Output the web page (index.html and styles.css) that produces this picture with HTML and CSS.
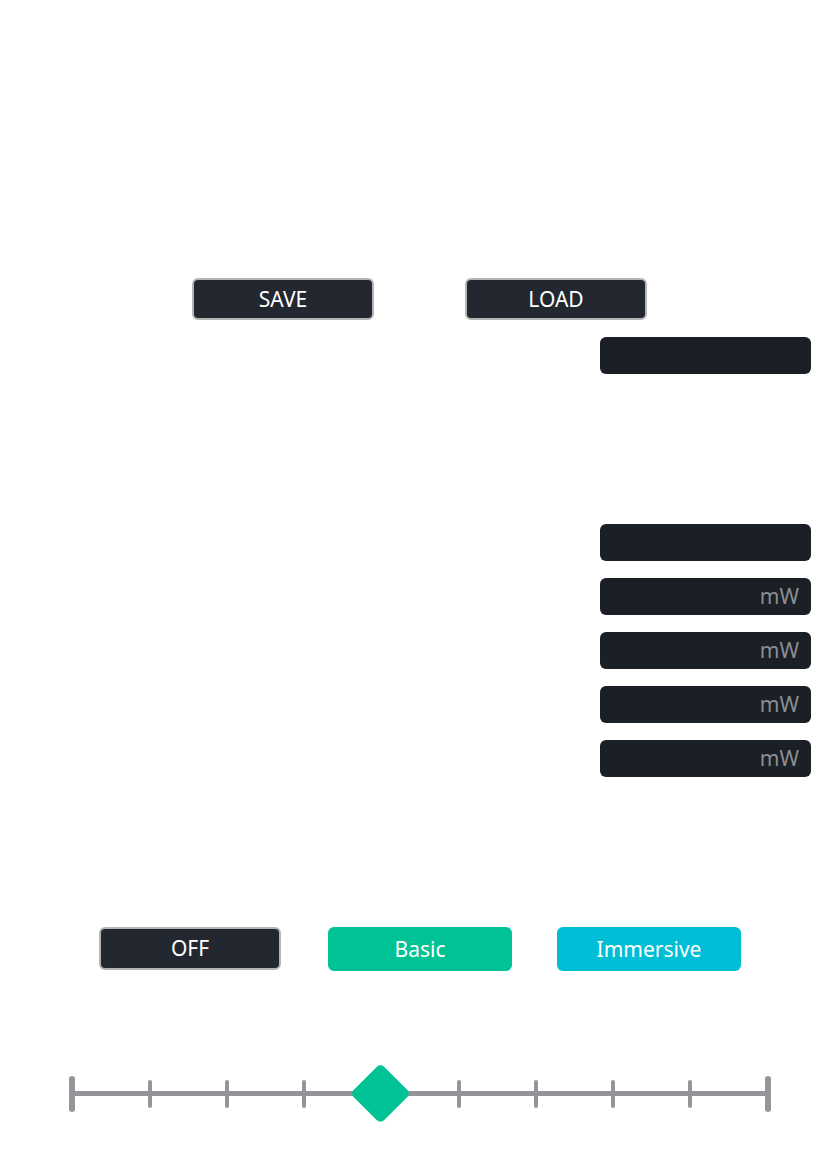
FILE: index.html
```html
<!DOCTYPE html>
<html>
<head>
<meta charset="utf-8">
<link rel="stylesheet" href="styles.css">
</head>
<body>
<div class="page">
  <div class="file-row">
    <button class="btn btn-dark">SAVE</button>
    <button class="btn btn-dark">LOAD</button>
  </div>
  <div class="field-row first"><div class="field"></div></div>
  <div class="field-group">
    <div class="field-row"><div class="field"></div></div>
    <div class="field-row"><div class="field"><span class="unit">mW</span></div></div>
    <div class="field-row"><div class="field"><span class="unit">mW</span></div></div>
    <div class="field-row"><div class="field"><span class="unit">mW</span></div></div>
    <div class="field-row"><div class="field"><span class="unit">mW</span></div></div>
  </div>
  <div class="mode-row">
    <button class="btn btn-dark mode-off">OFF</button>
    <button class="btn btn-green">Basic</button>
    <button class="btn btn-cyan">Immersive</button>
  </div>
  <div class="slider">
    <div class="track">
      <span class="tick end"></span>
      <span class="tick"></span>
      <span class="tick"></span>
      <span class="tick"></span>
      <span class="tick"></span>
      <span class="tick"></span>
      <span class="tick"></span>
      <span class="tick"></span>
      <span class="tick"></span>
      <span class="tick end"></span>
    </div>
    <div class="knob"></div>
  </div>
</div>
</body>
</html>
```

FILE: styles.css
```css
* { box-sizing: border-box; }
html, body { margin: 0; padding: 0; background: #ffffff; }
body {
  width: 836px;
  height: 1157px;
  overflow: hidden;
  font-family: "Noto Sans", "DejaVu Sans", sans-serif;
}
.page {
  display: flex;
  flex-direction: column;
  padding-top: 278px;
}
.btn {
  font-family: "Noto Sans", "DejaVu Sans", sans-serif;
  font-size: 21px;
  font-weight: 400;
  color: #ffffff;
  height: 42px;
  border-radius: 6px;
  border: none;
  padding: 0;
  display: flex;
  align-items: center;
  justify-content: center;
  line-height: 1;
}
.btn-dark {
  background: #232830;
  border: 2px solid #b5b5b5;
  width: 182px;
}
.btn-green { background: #00c295; width: 184px; height: 44px; }
.btn-cyan { background: #00bed6; width: 184px; height: 44px; }

.file-row {
  display: flex;
  justify-content: flex-start;
  padding-left: 192px;
  gap: 91px;
}
.field-row {
  display: flex;
  justify-content: flex-end;
  padding-right: 25px;
}
.field-row.first { margin-top: 17px; }
.field-group {
  margin-top: 150px;
  display: flex;
  flex-direction: column;
  gap: 17px;
}
.field {
  width: 211px;
  height: 37px;
  background: #1b1f26;
  border-radius: 6px;
  display: flex;
  align-items: center;
  justify-content: flex-end;
  padding-right: 12px;
}
.unit {
  color: #8b8e93;
  font-size: 21px;
  line-height: 1;
}
.mode-row {
  margin-top: 150px;
  display: flex;
  padding-left: 99px;
  gap: 46px;
  align-items: flex-start;
}
.mode-row .btn-green { margin-left: 1px; }
.mode-row .btn-cyan { margin-left: -1px; }
.mode-off { height: 43px; }

.slider {
  position: relative;
  margin-top: 105px;
  margin-left: 69px;
  width: 702px;
  height: 36px;
}
.track {
  position: relative;
  height: 36px;
  display: flex;
  justify-content: space-between;
  align-items: center;
}
.track::before {
  content: "";
  position: absolute;
  left: 3px;
  right: 3px;
  top: 15px;
  height: 5px;
  background: #939598;
}
.tick {
  position: relative;
  width: 4px;
  height: 28px;
  background: #939598;
  border-radius: 2px;
}
.tick.end {
  width: 6px;
  height: 36px;
  border-radius: 3px;
}
.knob {
  position: absolute;
  left: 290px;
  top: -4px;
  width: 43px;
  height: 43px;
  background: #00c295;
  border-radius: 5px;
  transform: rotate(45deg);
}
```
